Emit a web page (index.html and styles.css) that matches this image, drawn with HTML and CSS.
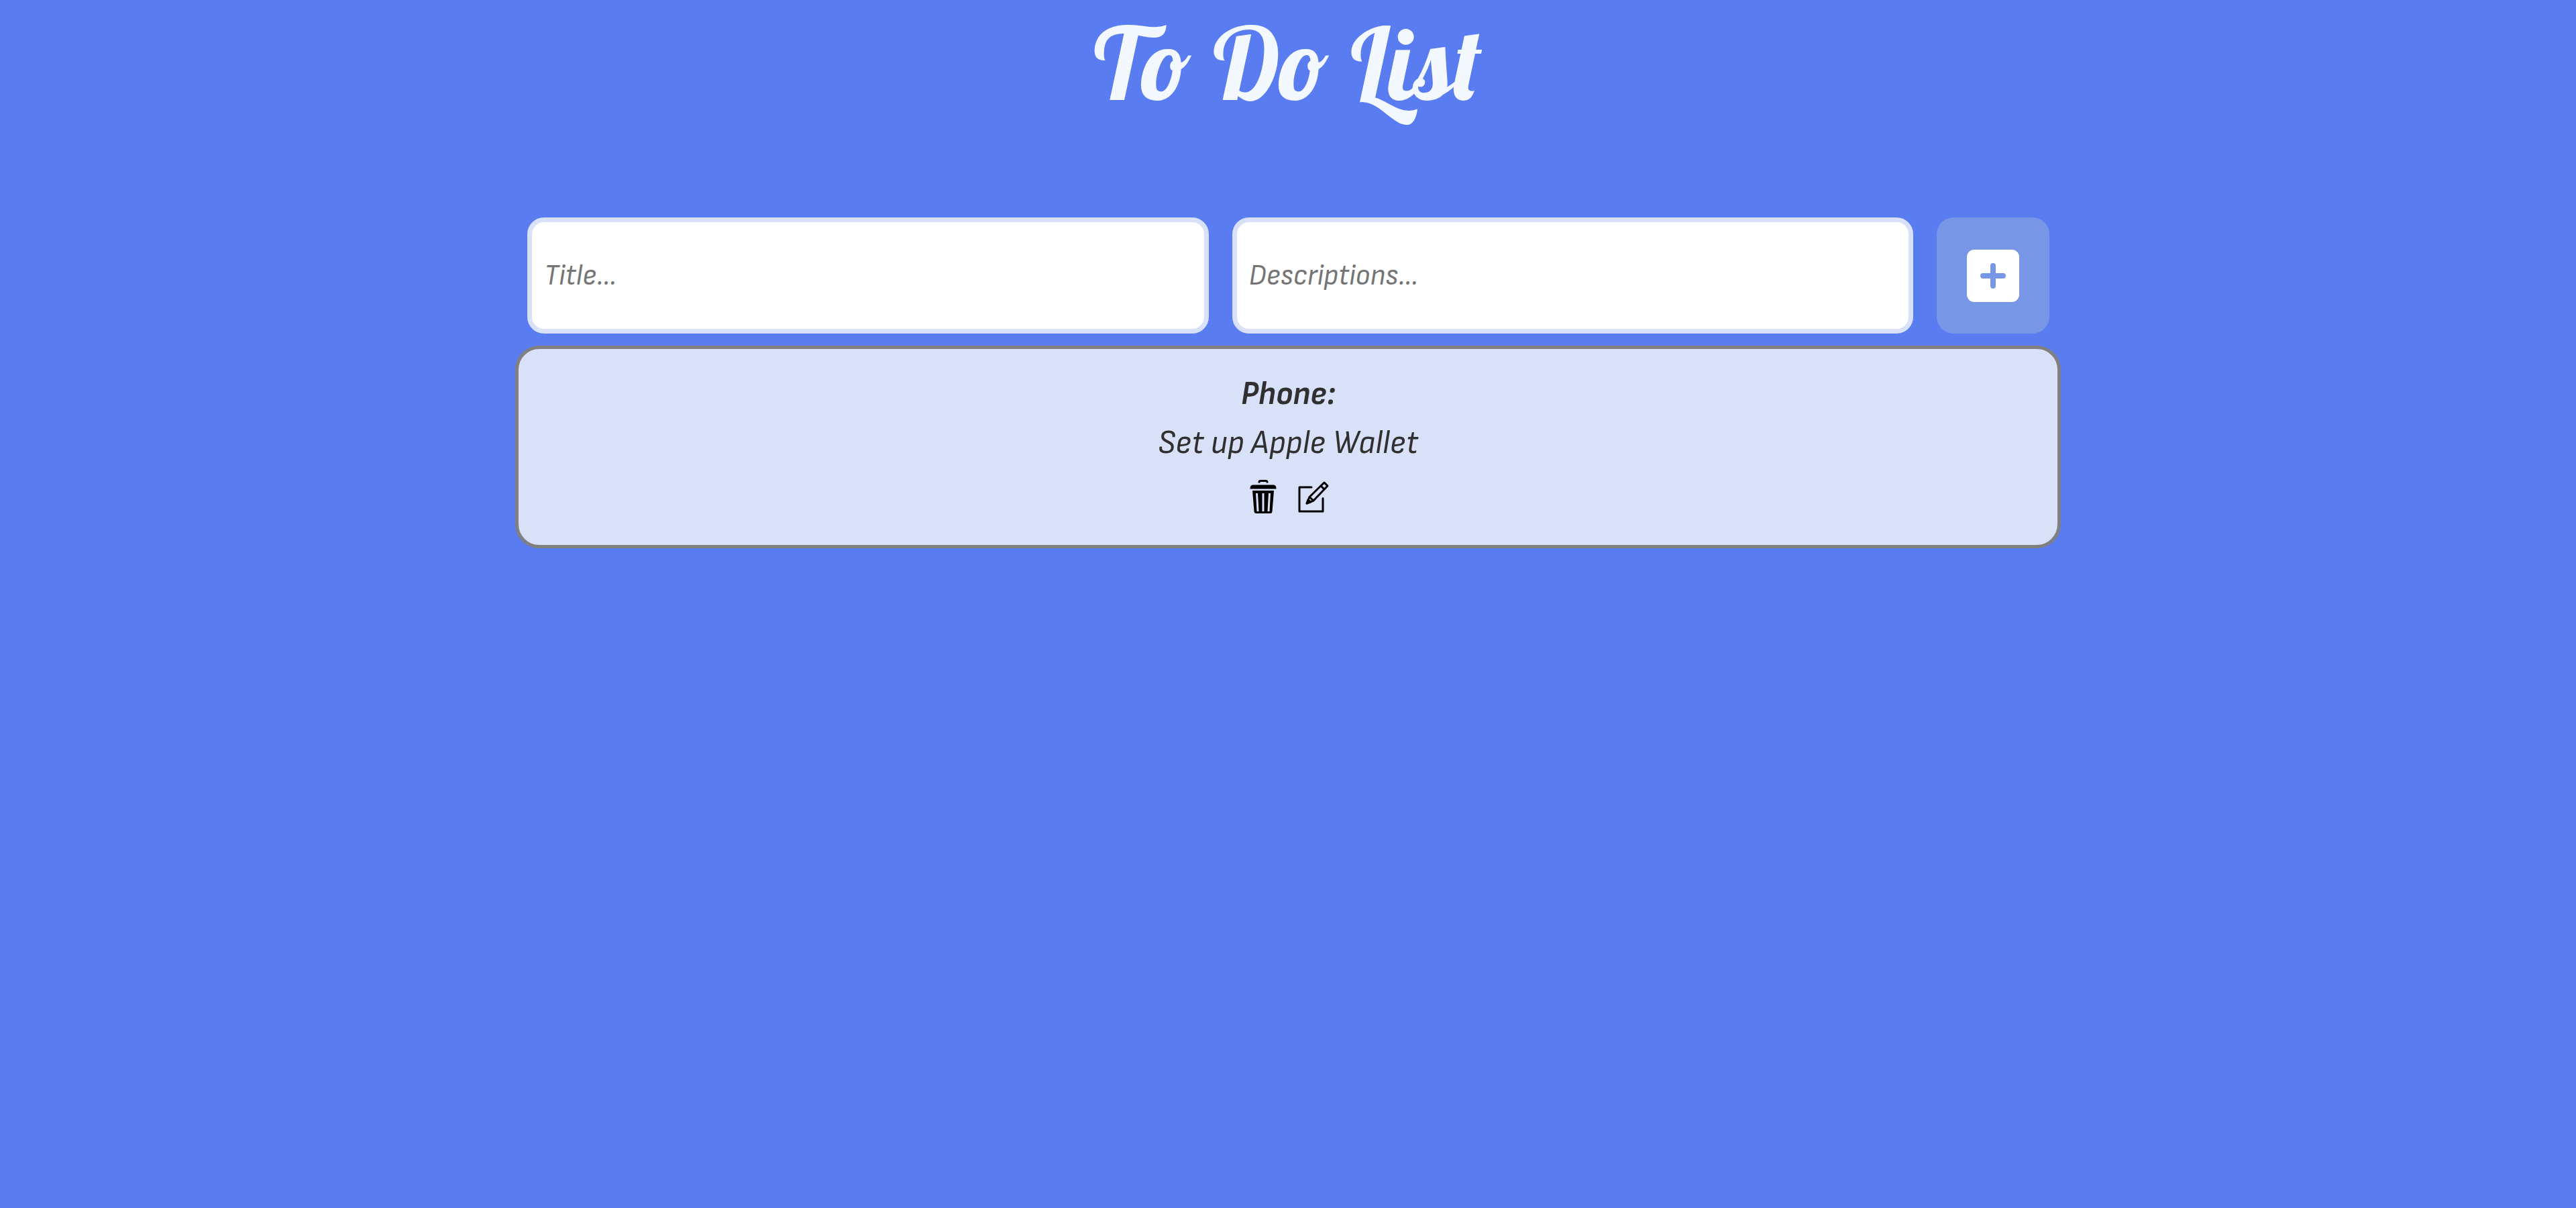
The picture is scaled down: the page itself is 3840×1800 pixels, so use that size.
FILE: index.html
```html
<!DOCTYPE html>
<html lang="en">
<head>
<meta charset="utf-8">
<title>To Do List</title>
<link rel="stylesheet" href="styles.css">
</head>
<body>
<main class="app">
  <h1 class="heading">To Do List</h1>
  <form class="entry">
    <input class="field" type="text" aria-label="Title" placeholder="Title...">
    <input class="field" type="text" aria-label="Description" placeholder="Descriptions...">
    <button class="add" type="button" aria-label="Add">
      <svg width="78" height="78" viewBox="0 0 78 78">
        <rect width="78" height="78" rx="11" fill="#fff"/>
        <path d="M39 24v30M24 39h30" stroke="#7896e6" stroke-width="8" stroke-linecap="round"/>
      </svg>
    </button>
  </form>
  <ul class="list">
    <li class="card">
      <h2 class="card-title">Phone:</h2>
      <p class="card-text">Set up Apple Wallet</p>
      <div class="actions">
        <button class="icon" type="button" aria-label="Delete">
          <svg width="51" height="56" viewBox="16 12 51 56">
            <path d="M37 19.500v-1q0-2 2-2h8q2 0 2 2v1" fill="none" stroke="#000" stroke-width="3"/>
            <path d="M23.500 28.500q0-6 4-6h31q4 0 4 6z"/>
            <path fill-rule="evenodd" d="M27 31h32l-2.500 31q-.3 3-3 3h-21q-2.700 0-3-3zM32 35l1.500 27h3L35 35zM41.500 35v27h3V35zM51 35l-1.500 27h3L54 35z"/>
          </svg>
        </button>
        <button class="icon" type="button" aria-label="Edit">
          <svg width="52" height="56" viewBox="92 12 52 56" fill="none" stroke="#000" stroke-width="3" stroke-linecap="round" stroke-linejoin="round">
            <path d="M115 26H97v36h35V42.500"/>
            <path d="M108 50l4-9.500 22-21.500 5 5L118 46z M112 40.500l6 5.500M129 24l5 5"/>
            <path d="M108 50l2-5 3.500 3z" fill="#000"/>
          </svg>
        </button>
      </div>
    </li>
  </ul>
</main>
</body>
</html>
```
FILE: styles.css
```css
* {
  box-sizing: border-box;
}

body {
  margin: 0;
  background: #597cf0;
  color: #303030;
  font-family: "Sofia Sans Semi Condensed", Roboto, sans-serif;
  font-style: italic;
}

.app {
  width: 60%;
  margin: 0 auto;
}

.heading {
  margin: 0 0 120px;
  color: #f3f8ff;
  font-family: Lobster, "Liberation Serif", serif;
  font-size: 150px;
  font-style: normal;
  font-weight: 400;
  line-height: 186px;
  text-align: center;
}

.entry {
  display: flex;
  gap: 35px;
  padding: 18px 17px 18px 18px;
}

.field {
  flex: 1;
  min-width: 0;
  height: 173px;
  padding: 0 18px;
  border: 7px solid #d9e1f9;
  border-radius: 25px;
  background: #fff;
  color: #303030;
  font: inherit;
  font-size: 44px;
}

.field::placeholder {
  color: #757575;
}

.add {
  display: flex;
  align-items: center;
  justify-content: center;
  width: 168px;
  padding: 0;
  border: 0;
  border-radius: 25px;
  background: #7896e6;
}

.list {
  margin: 0;
  padding: 0;
  list-style: none;
}

.card {
  padding: 31px 20px 44px;
  border: 5px solid #808080;
  border-radius: 36px;
  background: #d9e1f9;
  text-align: center;
}

.card-title,
.card-text {
  margin: 0;
  font-size: 50px;
  line-height: 73px;
}

.card-title {
  font-weight: 700;
}

.actions {
  display: flex;
  justify-content: center;
  gap: 25px;
  margin-top: 15px;
}

.icon {
  display: flex;
  padding: 0;
  border: 0;
  background: none;
}
```
